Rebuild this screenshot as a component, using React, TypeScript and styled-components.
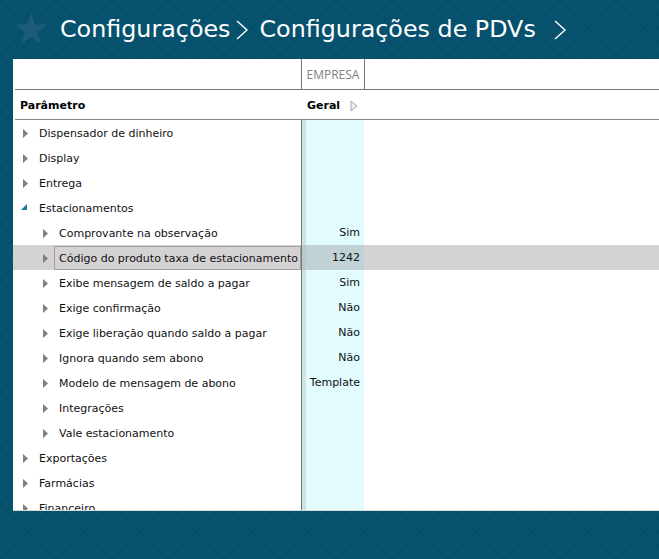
import React from 'react';
import styled, { createGlobalStyle } from 'styled-components';

const GlobalStyle = createGlobalStyle`
  html, body {
    margin: 0;
    padding: 0;
    height: 100%;
    overflow: hidden;
  }
  body {
    font-family: 'DejaVu Sans', sans-serif;
    background-color: #07526f;
  }
`;

interface Row {
  label: string;
  level: 0 | 1;
  value?: string;
  open?: boolean;
  selected?: boolean;
}

const rows: Row[] = [
  { label: 'Dispensador de dinheiro', level: 0 },
  { label: 'Display', level: 0 },
  { label: 'Entrega', level: 0 },
  { label: 'Estacionamentos', level: 0, open: true },
  { label: 'Comprovante na observação', level: 1, value: 'Sim' },
  { label: 'Código do produto taxa de estacionamento', level: 1, value: '1242', selected: true },
  { label: 'Exibe mensagem de saldo a pagar', level: 1, value: 'Sim' },
  { label: 'Exige confirmação', level: 1, value: 'Não' },
  { label: 'Exige liberação quando saldo a pagar', level: 1, value: 'Não' },
  { label: 'Ignora quando sem abono', level: 1, value: 'Não' },
  { label: 'Modelo de mensagem de abono', level: 1, value: 'Template' },
  { label: 'Integrações', level: 1 },
  { label: 'Vale estacionamento', level: 1 },
  { label: 'Exportações', level: 0 },
  { label: 'Farmácias', level: 0 },
  { label: 'Financeiro', level: 0 },
];

const Chevron = () => (
  <ChevronIcon width="14" height="22" viewBox="0 0 14 22">
    <path d="M2 2 L12 11 L2 20" fill="none" stroke="#fff" strokeWidth="1.4" />
  </ChevronIcon>
);

const Caret = ({ open }: { open?: boolean }) =>
  open ? (
    <OpenCaret width="7" height="7" viewBox="0 0 7 7">
      <path d="M0 6 L6 0 L6 6 Z" fill="#1a7a92" />
    </OpenCaret>
  ) : (
    <CaretIcon width="5" height="9" viewBox="0 0 5 9">
      <path d="M0 0 L5 4.5 L0 9 Z" fill="#808080" />
    </CaretIcon>
  );

export default function App() {
  return (
    <Page>
      <GlobalStyle />
      <Header>
        <Star width="32" height="31" viewBox="0 0 32 31">
          <path d="M16 0 L20 11.5 L32 11.5 L22.5 19 L26 31 L16 24 L6 31 L9.5 19 L0 11.5 L12 11.5 Z" fill="#1c5b7b" />
        </Star>
        <Title>Configurações</Title>
        <Chevron />
        <Title>Configurações de PDVs</Title>
        <LastChevron>
          <Chevron />
        </LastChevron>
      </Header>
      <Panel>
        <GroupRow>
          <GroupSpacer />
          <GroupCell>EMPRESA</GroupCell>
        </GroupRow>
        <ColumnRow>
          <ParamHead>Parâmetro</ParamHead>
          <GeralHead>
            Geral
            <SortIcon width="8" height="12" viewBox="0 0 8 12">
              <path d="M1 1 L7 6 L1 11 Z" fill="#eeeeee" stroke="#a8a8a8" />
            </SortIcon>
          </GeralHead>
        </ColumnRow>
        <Body>
          {rows.map((row) => (
            <DataRow key={row.label} $selected={row.selected}>
              <NameCell $level={row.level}>
                <Caret open={row.open} />
                <NameLabel $selected={row.selected}>{row.label}</NameLabel>
              </NameCell>
              <Splitter $selected={row.selected} />
              <ValueCell $selected={row.selected}>{row.value}</ValueCell>
            </DataRow>
          ))}
        </Body>
      </Panel>
    </Page>
  );
}

const Page = styled.div`
  width: 659px;
  height: 559px;
  overflow: hidden;
  background-color: #07526f;
  background-image:
    linear-gradient(45deg, transparent 47%, rgba(0, 0, 0, 0.07) 47% 53%, transparent 53%),
    linear-gradient(-45deg, transparent 47%, rgba(0, 0, 0, 0.07) 47% 53%, transparent 53%);
  background-size: 14px 14px;
`;

const Header = styled.header`
  height: 59px;
  box-sizing: border-box;
  padding: 0 0 2px 15px;
  display: flex;
  align-items: center;
  font-family: 'DejaVu Sans', sans-serif;
  color: #fff;
`;

const Star = styled.svg`
  margin-right: 13px;
`;

const Title = styled.span`
  font-size: 23.8px;
  white-space: nowrap;
`;

const ChevronIcon = styled.svg`
  margin: 3px 10px 0 5px;
`;

const LastChevron = styled.span`
  display: flex;
  margin-left: 12px;
`;

const Panel = styled.main`
  margin-left: 13px;
  height: 452px;
  box-sizing: border-box;
  background: #fff;
  border-bottom: 1px solid #d8d8d8;
  overflow: hidden;
  font-size: 11px;
  color: #111;
`;

const GroupRow = styled.div`
  height: 30px;
  margin-left: 2px;
  display: flex;
  border-bottom: 1px solid #777;
`;

const GroupSpacer = styled.div`
  width: 286px;
`;

const GroupCell = styled.div`
  width: 64px;
  box-sizing: border-box;
  padding-top: 1px;
  border-left: 1px solid #777;
  border-right: 1px solid #777;
  display: flex;
  align-items: center;
  justify-content: center;
  font-family: 'Open Sans', sans-serif;
  font-size: 12px;
  color: #808080;
`;

const ColumnRow = styled.div`
  height: 27px;
  margin-left: 2px;
  padding-top: 2px;
  display: flex;
  align-items: center;
  border-bottom: 1px solid #888;
  font-weight: 700;
  color: #000;
`;

const ParamHead = styled.div`
  width: 286px;
  box-sizing: border-box;
  padding-left: 5px;
`;

const GeralHead = styled.div`
  display: flex;
  align-items: center;
  gap: 10px;
  padding-left: 6px;
`;

const SortIcon = styled.svg`
  display: block;
`;

const Body = styled.div`
  display: flex;
  flex-direction: column;
`;

const DataRow = styled.div<{ $selected?: boolean }>`
  height: 25px;
  flex: none;
  display: flex;
  background: ${(p) => (p.$selected ? '#d4d2d3' : 'transparent')};
`;

const NameCell = styled.div<{ $level: number }>`
  width: 288px;
  box-sizing: border-box;
  flex: none;
  display: flex;
  align-items: center;
  padding-left: ${(p) => (p.$level ? 30 : 10)}px;
`;

const CaretIcon = styled.svg`
  flex: none;
  margin: 1px 11px 0 0;
`;

const OpenCaret = styled.svg`
  flex: none;
  margin: 0 11px 0 -2px;
`;

const NameLabel = styled.span<{ $selected?: boolean }>`
  white-space: nowrap;
  line-height: 21px;
  padding-top: 2px;
  ${(p) =>
    p.$selected
      ? `
    margin-left: -5px;
    padding: 1px 2px 0 4px;
    border: 1px solid #a0a0a0;
  `
      : ''}
`;

const Splitter = styled.div<{ $selected?: boolean }>`
  width: 5px;
  flex: none;
  box-sizing: border-box;
  border-left: 1px solid #777;
  background: ${(p) => (p.$selected ? '#b9c9cc' : '#cfe4e5')};
`;

const ValueCell = styled.div<{ $selected?: boolean }>`
  width: 58px;
  flex: none;
  box-sizing: border-box;
  padding: 1px 4px 0 0;
  text-align: right;
  line-height: 23px;
  background: ${(p) => (p.$selected ? '#c0d2d6' : '#e2fbfd')};
`;
